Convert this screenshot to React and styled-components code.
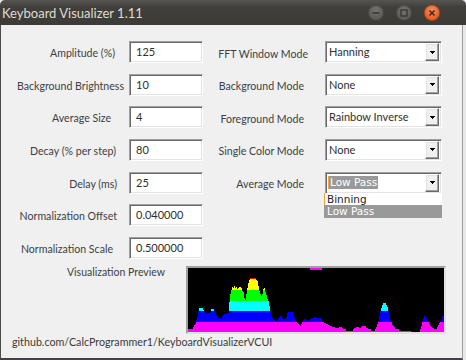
import React from 'react'
import styled, { createGlobalStyle } from 'styled-components'

//#region Styles

const GlobalStyle = createGlobalStyle`
  html, body {
    margin: 0;
    padding: 0;
    background: #e8e8e8;
  }
  body {
    font-family: Lato, "Open Sans", sans-serif;
  }
`

const Window = styled.div`
  width: 466px;
  height: 360px;
  display: flex;
  flex-direction: column;
  overflow: hidden;
  background: #e8e8e8;
`

const TitleBar = styled.header`
  flex: none;
  height: 25px;
  box-sizing: border-box;
  display: flex;
  align-items: center;
  justify-content: space-between;
  padding: 0 26px 0 2px;
  border-radius: 5px 5px 0 0;
  background: linear-gradient(#55544f, #403f3b 30%, #3c3b37);
  color: #dfdbd2;
  font: 13px Lato, "Open Sans", sans-serif;
`

const WindowButtons = styled.div`
  display: flex;
  gap: 12px;
`

const WinButton = styled.span`
  width: 16px;
  height: 16px;
  border-radius: 50%;
  display: flex;
  align-items: center;
  justify-content: center;
  background: ${p => p.$close
    ? 'radial-gradient(circle at 50% 35%, #f98d5a, #e65a22 70%, #c9461a)'
    : 'radial-gradient(circle at 50% 35%, #74736e, #5b5a56 70%, #4a4945)'};
  box-shadow: inset 0 0 0 1px rgba(0, 0, 0, 0.25);
`

const Body = styled.main`
  flex: 1;
  display: flex;
  flex-direction: column;
  margin-right: 3px;
  padding-top: 16px;
  background: #f0f0f0;
  border-left: 1px solid #4b4a46;
  border-right: 1px solid #9d9d9d;
  border-bottom: 2px solid #4a3f48;
  font-size: 11px;
  color: #3a3a3a;
`

const Fields = styled.div`
  display: flex;
`

const FieldList = styled.div`
  display: grid;
  grid-template-columns: ${p => p.$cols};
  grid-auto-rows: 22px;
  row-gap: 10.67px;
  align-content: start;
`

const Label = styled.span`
  align-self: center;
  text-align: right;
  white-space: nowrap;
  font-size: 10.6px;
  color: #3c3f45;
  padding-right: ${p => p.$inset}px;
  margin-top: ${p => p.$drop}px;
`

const sunken = `
  box-sizing: border-box;
  height: 22px;
  background: #fff;
  border: 1px solid;
  border-color: #a0a0a0 #fff #fff #a0a0a0;
  box-shadow: inset 1px 1px 0 #696969, inset -1px -1px 0 #e3e3e3;
  display: flex;
  align-items: center;
  color: #2e2e2e;
`

const TextBox = styled.div`
  ${sunken}
  padding: 0 6px 1px;
`

const Combo = styled.div`
  ${sunken}
  position: relative;
  padding: 0 2px 1px 3px;
`

const ComboText = styled.span`
  flex: 1;
  white-space: nowrap;
`

const Selected = styled.span`
  display: inline-block;
  padding: 0 1px;
  line-height: 13px;
  background: #999999;
  color: #fff;
  font-family: "DejaVu Sans", sans-serif;
  font-size: 10.5px;
  border-left: 1px solid #f2a53a;
  margin-left: -1px;
`

const ArrowButton = styled.span`
  width: 14px;
  height: 18px;
  box-sizing: border-box;
  margin-top: 1px;
  display: flex;
  align-items: center;
  justify-content: center;
  background: #f0f0f0;
  border: 1px solid;
  border-color: #fff #696969 #696969 #fff;
  box-shadow: inset -1px -1px 0 #a0a0a0, inset 1px 1px 0 #e3e3e3;
`

const Popup = styled.ul`
  position: absolute;
  top: 100%;
  left: -2px;
  right: -1px;
  margin: 0;
  padding: 0;
  list-style: none;
  background: #fff;
  font-family: "DejaVu Sans", sans-serif;
  font-size: 10.5px;
  color: #222;
  z-index: 2;
`

const PopupItem = styled.li`
  height: 12.5px;
  line-height: 12.5px;
  padding-left: 2px;
  background: ${p => (p.$active ? '#999999' : '#fff')};
  color: ${p => (p.$active ? '#fff' : '#222')};
  border-left: 1px solid ${p => (p.$hover ? '#f2a53a' : 'transparent')};
`

const PreviewRow = styled.section`
  display: grid;
  grid-template-columns: 185px 260px;
  margin-top: 7px;
`

const PreviewLabel = styled.span`
  text-align: right;
  padding-right: 21px;
  line-height: 13px;
  font-size: 10.5px;
  color: #3c3f45;
`

const PreviewBox = styled.div`
  width: 260px;
  height: 68px;
  box-sizing: border-box;
  border: 2px solid;
  border-color: #a0a0a0 #e0e0e0 #e0e0e0 #a0a0a0;
  background: #000;

  svg {
    display: block;
  }
`

const Footer = styled.footer`
  padding-left: 11px;
  line-height: 15px;
  font-size: 10.7px;
`
//#endregion

const LEFT_FIELDS = [
  { label: 'Amplitude (%)', value: '125', inset: 14 },
  { label: 'Background Brightness', value: '10', inset: 5 },
  { label: 'Average Size', value: '4', inset: 18 },
  { label: 'Decay (% per step)', value: '80', inset: 13 },
  { label: 'Delay (ms)', value: '25', inset: 12 },
  { label: 'Normalization Offset', value: '0.040000', inset: 12 },
  { label: 'Normalization Scale', value: '0.500000', inset: 16 },
]

const RIGHT_FIELDS = [
  { label: 'FFT Window Mode', value: 'Hanning', inset: 17 },
  { label: 'Background Mode', value: 'None', inset: 21 },
  { label: 'Foreground Mode', value: 'Rainbow Inverse', inset: 21 },
  { label: 'Single Color Mode', value: 'None', inset: 21 },
  { label: 'Average Mode', value: 'Low Pass', inset: 21, open: true },
]

// column, height (px of 64) — traced from the preview
const KEYS = [
  [0, 3], [4, 3], [5, 5], [7, 8], [9, 15], [10, 21], [11, 24], [14, 24], [16, 20], [19, 18],
  [21, 19], [22, 20], [23, 23], [25, 23], [27, 19], [29, 15], [31, 13], [33, 14], [35, 17],
  [37, 18], [40, 19], [41, 30], [42, 38], [43, 42], [44, 45], [45, 44], [46, 46], [47, 44],
  [48, 45], [49, 43], [50, 44], [51, 45], [52, 45], [53, 44], [54, 41], [55, 40], [56, 34],
  [57, 32], [58, 38], [59, 44], [60, 49], [61, 52], [62, 54], [67, 54], [68, 52], [69, 51],
  [70, 46], [71, 41], [72, 38], [73, 36], [74, 38], [75, 43], [76, 44], [77, 40], [78, 37],
  [79, 33], [80, 31], [81, 26], [82, 21], [83, 16], [84, 14], [85, 12], [88, 11], [89, 12],
  [90, 14], [91, 15], [93, 16], [94, 14], [95, 13], [97, 12], [98, 15], [99, 19], [100, 20],
  [104, 20], [105, 17], [106, 15], [107, 12], [108, 10], [110, 8], [112, 6], [113, 8],
  [114, 10], [116, 13], [118, 12], [120, 11], [122, 13], [124, 14], [127, 15], [128, 14],
  [133, 14], [134, 10], [136, 9], [138, 8], [140, 7], [142, 6], [145, 5], [147, 4], [150, 4],
  [152, 5], [153, 5], [155, 3], [157, 3], [158, 1], [164, 1], [165, 3], [167, 4], [169, 5],
  [171, 4], [172, 4], [174, 6], [177, 6], [178, 4], [180, 3], [182, 3], [183, 1], [186, 1],
  [187, 3], [188, 5], [189, 8], [190, 11], [191, 16], [192, 21], [193, 24], [194, 27],
  [195, 29], [197, 29], [198, 27], [199, 25], [200, 21], [201, 17], [202, 12], [203, 10],
  [204, 7], [206, 5], [207, 3], [210, 3], [211, 1], [222, 1], [223, 0], [231, 0], [232, 3],
  [233, 6], [234, 11], [235, 14], [236, 16], [237, 16], [238, 14], [239, 12], [240, 10],
  [241, 8], [242, 6], [244, 4], [246, 3], [248, 3], [249, 5], [250, 7], [251, 9], [252, 11],
  [253, 13], [254, 16], [255, 16],
]

const BANDS = [
  [0, 10, '#ff00ff'],
  [10, 21, '#0000ff'],
  [21, 31, '#00ffff'],
  [31, 42, '#00ff00'],
  [42, 53, '#ffff00'],
  [53, 64, '#ff0000'],
]

function buildSpectrum() {
  const h = []
  for (let k = 0; k < KEYS.length - 1; k++) {
    const [x0, y0] = KEYS[k]
    const [x1, y1] = KEYS[k + 1]
    for (let x = x0; x < x1; x++) h[x] = Math.round(y0 + ((y1 - y0) * (x - x0)) / (x1 - x0))
  }
  h[255] = KEYS[KEYS.length - 1][1]
  return h
}

function Spectrum() {
  const heights = buildSpectrum()
  let points = '0,64'
  heights.forEach((h, i) => {
    points += ` ${i},${64 - h} ${i + 1},${64 - h}`
  })
  points += ' 256,64'
  return (
    <svg width="256" height="64" viewBox="0 0 256 64" shapeRendering="crispEdges">
      <defs>
        <clipPath id="spectrum">
          <polygon points={points} />
        </clipPath>
      </defs>
      <g clipPath="url(#spectrum)">
        {BANDS.map(([lo, hi, color]) => (
          <rect key={color} x="0" y={64 - hi} width="256" height={hi - lo} fill={color} />
        ))}
      </g>
      <rect x="122" y="0" width="12" height="2" fill="#ff00ff" />
    </svg>
  )
}

function DownArrow() {
  return (
    <svg width="5" height="3" viewBox="0 0 5 3" shapeRendering="crispEdges">
      <rect x="0" y="0" width="5" height="1" fill="#000" />
      <rect x="1" y="1" width="3" height="1" fill="#000" />
      <rect x="2" y="2" width="1" height="1" fill="#000" />
    </svg>
  )
}

function ComboBox({ value, open }) {
  return (
    <Combo>
      <ComboText>{open ? <Selected>{value}</Selected> : value}</ComboText>
      <ArrowButton>
        <DownArrow />
      </ArrowButton>
      {open && (
        <Popup>
          <PopupItem $hover>Binning</PopupItem>
          <PopupItem $active>Low Pass</PopupItem>
        </Popup>
      )}
    </Combo>
  )
}

export default function App() {
  return (
    <>
      <GlobalStyle />
      <Window>
        <TitleBar>
          <span>Keyboard Visualizer 1.11</span>
          <WindowButtons>
            <WinButton>
              <svg width="8" height="8" viewBox="0 0 8 8">
                <rect x="0.5" y="3.2" width="7" height="1.6" fill="#3a3935" />
              </svg>
            </WinButton>
            <WinButton>
              <svg width="8" height="8" viewBox="0 0 8 8">
                <rect x="1" y="1" width="6" height="6" fill="none" stroke="#3a3935" strokeWidth="1.4" />
              </svg>
            </WinButton>
            <WinButton $close>
              <svg width="8" height="8" viewBox="0 0 8 8">
                <path d="M1.5 1.5l5 5M6.5 1.5l-5 5" stroke="#3a2a22" strokeWidth="1.5" />
              </svg>
            </WinButton>
          </WindowButtons>
        </TitleBar>
        <Body>
          <Fields>
            <FieldList $cols="128px 74px">
              {LEFT_FIELDS.map(f => (
                <React.Fragment key={f.label}>
                  <Label $inset={f.inset} $drop={2}>{f.label}</Label>
                  <TextBox>{f.value}</TextBox>
                </React.Fragment>
              ))}
            </FieldList>
            <FieldList $cols="122px 117px">
              {RIGHT_FIELDS.map(f => (
                <React.Fragment key={f.label}>
                  <Label $inset={f.inset} $drop={3}>{f.label}</Label>
                  <ComboBox value={f.value} open={f.open} />
                </React.Fragment>
              ))}
            </FieldList>
          </Fields>
          <PreviewRow>
            <PreviewLabel>Visualization Preview</PreviewLabel>
            <PreviewBox>
              <Spectrum />
            </PreviewBox>
          </PreviewRow>
          <Footer>github.com/CalcProgrammer1/KeyboardVisualizerVCUI</Footer>
        </Body>
      </Window>
    </>
  )
}
